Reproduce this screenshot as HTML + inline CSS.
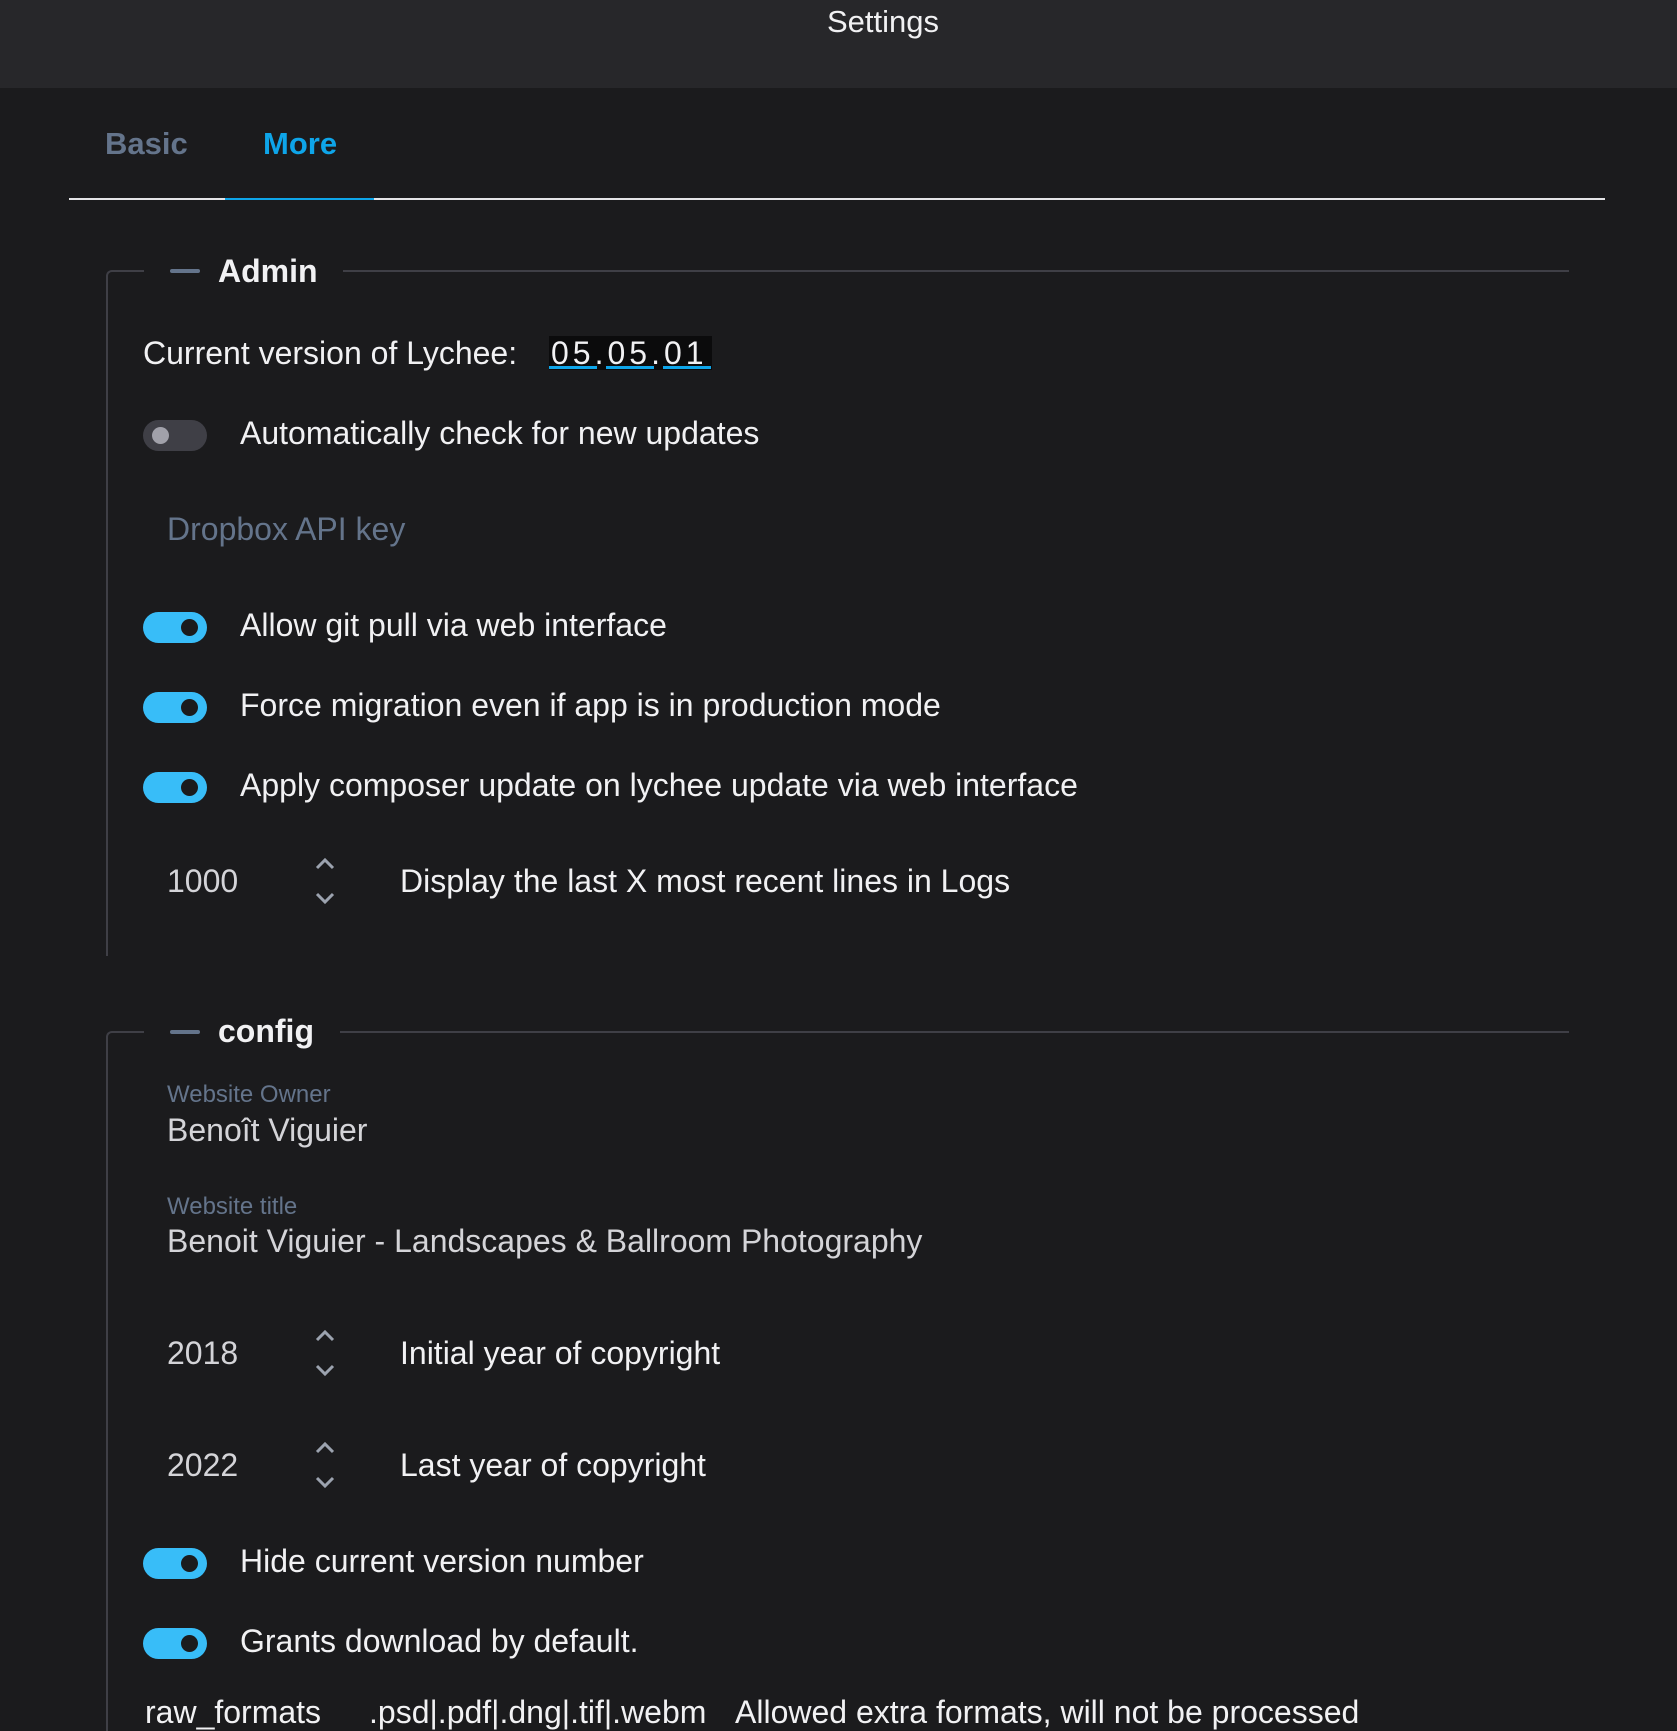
<!DOCTYPE html>
<html><head><meta charset="utf-8"><style>
*{margin:0;padding:0;box-sizing:border-box}
body{width:1677px;height:1716px;overflow:hidden;background:#1b1b1d;font-family:"Liberation Sans",sans-serif;color:#f1f1f3;position:relative}
.a{position:absolute;white-space:nowrap}
.hdr{position:absolute;left:0;top:0;width:1677px;height:88px;background:#27272a}
.t{font-size:32px;line-height:1}
.tog{position:absolute;width:64px;height:31px;border-radius:16px;background:#38bdf8}
.tog::after{content:"";position:absolute;right:9px;top:7px;width:17px;height:17px;border-radius:50%;background:#1b1b1d}
.off{background:#3f3f46}
.off::after{left:9px;right:auto;background:#a1a1aa}
.lbl{font-size:24px;color:#64748b}
.gray{color:#d4d4d8}
</style></head><body>
<div class="hdr"></div>
<div class="a" style="left:827px;top:6px;font-size:31px;line-height:1">Settings</div>
<div class="a" style="left:105px;top:128px;font-size:31px;line-height:1;font-weight:bold;color:#64748b">Basic</div>
<div class="a" style="left:263px;top:128px;font-size:31px;line-height:1;font-weight:bold;color:#0ea5e9">More</div>
<div class="a" style="left:69px;top:198px;width:1536px;height:2px;background:#e4e4e7"></div>
<div class="a" style="left:225px;top:198px;width:149px;height:2px;background:#0ea5e9"></div>

<div class="a" style="left:106px;top:270px;width:38px;height:686px;border-left:2px solid #3f3f46;border-top:2px solid #3f3f46;border-top-left-radius:6px"></div>
<div class="a" style="left:343px;top:270px;width:1226px;height:2px;background:#3f3f46"></div>
<div class="a" style="left:170px;top:269px;width:30px;height:4px;background:#64748b;border-radius:2px"></div>
<div class="a t" style="left:218px;top:255px;font-weight:bold">Admin</div>

<div class="a t" style="left:143px;top:337px;">Current version of Lychee:</div>
<div class="a" style="left:549px;top:336px;width:163px;height:34px;background:#0b0b0c"></div>
<div class="a t" style="left:551px;top:337px;letter-spacing:4px">05.05.01</div>
<div class="a" style="left:549px;top:366px;width:48px;height:3px;background:#0ea5e9"></div>
<div class="a" style="left:606px;top:366px;width:48px;height:3px;background:#0ea5e9"></div>
<div class="a" style="left:663px;top:366px;width:48px;height:3px;background:#0ea5e9"></div>

<div class="tog off" style="left:143px;top:420px"></div>
<div class="a t" style="left:240px;top:417px;">Automatically check for new updates</div>
<div class="a t" style="left:167px;top:513px;color:#64748b">Dropbox API key</div>

<div class="tog" style="left:143px;top:612px"></div>
<div class="a t" style="left:240px;top:609px;">Allow git pull via web interface</div>
<div class="tog" style="left:143px;top:692px"></div>
<div class="a t" style="left:240px;top:689px;">Force migration even if app is in production mode</div>
<div class="tog" style="left:143px;top:772px"></div>
<div class="a t" style="left:240px;top:769px;">Apply composer update on lychee update via web interface</div>

<div class="a t gray" style="left:167px;top:865px;">1000</div>
<svg class="a" style="left:314px;top:855px" width="22" height="52"><path d="M3 13 L11 5 L19 13 M3 39 L11 47 L19 39" stroke="#9ca3af" stroke-width="3" fill="none"/></svg>
<div class="a t" style="left:400px;top:865px;">Display the last X most recent lines in Logs</div>

<div class="a" style="left:106px;top:1031px;width:38px;height:700px;border-left:2px solid #3f3f46;border-top:2px solid #3f3f46;border-top-left-radius:6px"></div>
<div class="a" style="left:340px;top:1031px;width:1229px;height:2px;background:#3f3f46"></div>
<div class="a" style="left:170px;top:1030px;width:30px;height:4px;background:#64748b;border-radius:2px"></div>
<div class="a t" style="left:218px;top:1015px;font-weight:bold">config</div>

<div class="a lbl" style="left:167px;top:1081px;">Website Owner</div>
<div class="a t gray" style="left:167px;top:1114px;">Benoît Viguier</div>
<div class="a lbl" style="left:167px;top:1193px;">Website title</div>
<div class="a t gray" style="left:167px;top:1225px;">Benoit Viguier - Landscapes &amp; Ballroom Photography</div>

<div class="a t gray" style="left:167px;top:1337px;">2018</div>
<svg class="a" style="left:314px;top:1327px" width="22" height="52"><path d="M3 13 L11 5 L19 13 M3 39 L11 47 L19 39" stroke="#9ca3af" stroke-width="3" fill="none"/></svg>
<div class="a t" style="left:400px;top:1337px;">Initial year of copyright</div>

<div class="a t gray" style="left:167px;top:1449px;">2022</div>
<svg class="a" style="left:314px;top:1439px" width="22" height="52"><path d="M3 13 L11 5 L19 13 M3 39 L11 47 L19 39" stroke="#9ca3af" stroke-width="3" fill="none"/></svg>
<div class="a t" style="left:400px;top:1449px;">Last year of copyright</div>

<div class="tog" style="left:143px;top:1628px;top:1548px"></div>
<div class="a t" style="left:240px;top:1545px;">Hide current version number</div>
<div class="tog" style="left:143px;top:1628px"></div>
<div class="a t" style="left:240px;top:1625px;">Grants download by default.</div>

<div class="a t" style="left:145px;top:1696px;">raw_formats</div>
<div class="a t" style="left:369px;top:1696px;">.psd|.pdf|.dng|.tif|.webm</div>
<div class="a t" style="left:735px;top:1696px;">Allowed extra formats, will not be processed</div>
</body></html>
